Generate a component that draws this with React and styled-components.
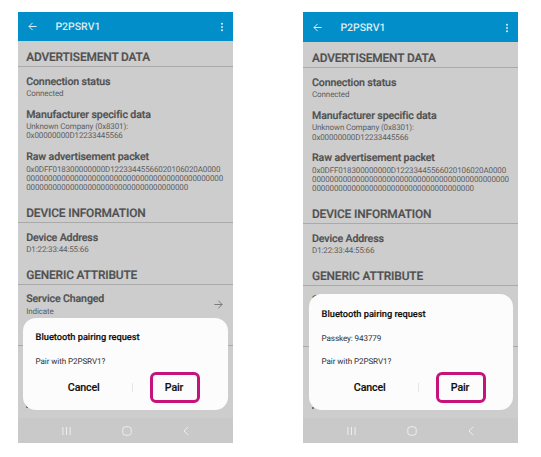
import React from "react";
import styled, { createGlobalStyle } from "styled-components";

const GlobalStyle = createGlobalStyle`
  * { box-sizing: border-box; }
  body { margin: 0; background: #fff; font-family: Roboto, sans-serif; }
`;

const Page = styled.main`
  width: 541px;
  height: 457px;
  display: flex;
  gap: 70px;
  padding: 12px 0 0 18px;
  overflow: hidden;
  text-rendering: geometricPrecision;
`;

const Phone = styled.section`
  position: relative;
  flex: none;
  width: 215px;
  height: 431px;
  display: flex;
  flex-direction: column;
  overflow: hidden;
  background: #cdcdcd;
  color: #505050;
  --inset: ${(p) => (p.$late ? "9px" : "8.2px")};
`;

const AppBar = styled.header`
  flex: none;
  height: ${(p) => (p.$late ? "29.8px" : "28.7px")};
  padding: ${(p) => (p.$late ? "2px" : "1px")} 9px 0 10px;
  display: flex;
  align-items: center;
  background: #028fc9;
  color: #dcecf4;
`;

const AppTitle = styled.h1`
  flex: 1;
  margin: 0 0 0 18.4px;
  padding-top: 1px;
  font-size: 10.5px;
  line-height: 14px;
  font-weight: 500;
`;

const Content = styled.div`
  flex: 1;
  min-height: 0;
  overflow: hidden;
`;

const SectionTitle = styled.h2`
  margin: 0;
  height: ${(p) => (p.$first ? "26.3px" : "30.2px")};
  padding: 0 var(--inset) 0.9px;
  display: flex;
  align-items: flex-end;
  border-bottom: 1px solid #aaa;
  font-size: 11.9px;
  line-height: 16px;
  font-weight: 500;
  letter-spacing: -0.14px;
  -webkit-text-stroke: 0.2px;
  white-space: nowrap;
`;

const Item = styled.div`
  display: flex;
  align-items: center;
  justify-content: space-between;
  padding: ${(p) => (p.$next ? "9.3px" : "7.6px")} 10px 0 var(--inset);
`;

const ItemName = styled.div`
  font-size: 10.6px;
  line-height: 14px;
  font-weight: 500;
  letter-spacing: -0.12px;
  -webkit-text-stroke: 0.2px;
  padding-bottom: 0.4px;
  white-space: nowrap;
`;

const ItemValue = styled.div`
  font-size: 8px;
  line-height: 9.4px;
  letter-spacing: -0.12px;
  color: #5e5e5e;
  white-space: nowrap;
`;

const Divider = styled.div`
  height: 1px;
  margin-top: ${(p) => (p.$late ? "38.4px" : "29px")};
  background: #aaa;
`;

const NextRow = styled.div`
  padding: 60px 0 0 var(--inset);

  &::before {
    content: "";
    display: block;
    width: 2px;
    height: 2px;
    background: #777;
  }
`;

const NavBar = styled.nav`
  flex: none;
  height: 25px;
  padding: 0 44px;
  display: flex;
  align-items: center;
  justify-content: space-between;
  background: #c9c9c9;
  color: #f2f2f2;
`;

const Dialog = styled.div`
  position: absolute;
  left: ${(p) => (p.$late ? "5.8px" : "4.8px")};
  bottom: 33.3px;
  width: ${(p) => (p.$late ? "204px" : "205px")};
  height: ${(p) => (p.$late ? "115.3px" : "92px")};
  padding: 13.3px 12.8px 0;
  display: flex;
  flex-direction: column;
  border-radius: 13px;
  background: #fcfcfc;
  color: #111;
`;

const DialogTitle = styled.h3`
  margin: 0;
  font-size: 9.3px;
  line-height: 14px;
  font-weight: 500;
  letter-spacing: -0.04px;
  -webkit-text-stroke: 0.15px;
  white-space: nowrap;
`;

const DialogText = styled.p`
  margin: ${(p) => (p.$first ? "10px" : "11.2px")} 0 0;
  font-size: 8.1px;
  line-height: 12px;
  letter-spacing: -0.1px;
  color: #303030;
  white-space: nowrap;
`;

const Actions = styled.div`
  display: flex;
  align-items: center;
  margin-top: 5.4px;
`;

const Button = styled.button`
  width: 96.3px;
  height: 31px;
  padding: 0;
  border: 0;
  background: none;
  font: 500 10.7px/31px Roboto, sans-serif;
  letter-spacing: -0.15px;
  -webkit-text-stroke: 0.15px;
  color: #111;
`;

const Separator = styled.span`
  width: 1px;
  height: 9px;
  background: #e6e6e6;
`;

const PairButton = styled(Button)`
  width: 50.3px;
  margin-left: 17px;
  border: 3px solid #c5137b;
  border-radius: 6px;
  line-height: 25px;
  padding-right: 2px;
`;

const Icon = styled.svg`
  flex: none;
  display: block;
  fill: none;
  stroke: currentColor;
`;

function BackIcon() {
  return (
    <Icon width="9" height="9" viewBox="0 0 9 9" strokeWidth="1">
      <path d="M8.6 4.5H1M4.6 .9 1 4.5l3.6 3.6" />
    </Icon>
  );
}

function MoreIcon() {
  return (
    <Icon width="4" height="10" viewBox="0 0 4 10">
      <g fill="currentColor" stroke="none">
        <circle cx="2" cy="1.8" r="1" />
        <circle cx="2" cy="5" r="1" />
        <circle cx="2" cy="8.2" r="1" />
      </g>
    </Icon>
  );
}

function ForwardIcon() {
  return (
    <Icon width="9" height="9" viewBox="0 0 9 9" strokeWidth="0.9" color="#707070">
      <path d="M.4 4.5H8M4.4 .7 8.1 4.5 4.4 8.3" />
    </Icon>
  );
}

function SystemNav() {
  return (
    <NavBar>
      <Icon width="9" height="10" viewBox="0 0 9 10" strokeWidth="0.9">
        <path d="M.9 1v8M4.5 1v8M8.1 1v8" />
      </Icon>
      <Icon width="10" height="10" viewBox="0 0 10 10" strokeWidth="0.9">
        <rect x="0.8" y="0.8" width="8.4" height="8.4" rx="2.6" />
      </Icon>
      <Icon width="6" height="10" viewBox="0 0 6 10" strokeWidth="0.9">
        <path d="M5.2 1 1 5l4.2 4" />
      </Icon>
    </NavBar>
  );
}

function Field({ name, lines = [], next, arrow }) {
  return (
    <Item $next={next}>
      <div>
        <ItemName>{name}</ItemName>
        {lines.map((line) => (
          <ItemValue key={line}>{line}</ItemValue>
        ))}
      </div>
      {arrow && <ForwardIcon />}
    </Item>
  );
}

function PairingScreen({ late, messages }) {
  return (
    <Phone $late={late}>
      <AppBar $late={late}>
        <BackIcon />
        <AppTitle>P2PSRV1</AppTitle>
        <MoreIcon />
      </AppBar>
      <Content>
        <SectionTitle $first>ADVERTISEMENT DATA</SectionTitle>
        <Field name="Connection status" lines={["Connected"]} />
        <Field
          next
          name="Manufacturer specific data"
          lines={["Unknown Company (0x8301):", "0x00000000D12233445566"]}
        />
        <Field
          next
          name="Raw advertisement packet"
          lines={[
            "0x0DFF018300000000D12233445566020106020A0000",
            "0".repeat(45),
            "0".repeat(37),
          ]}
        />
        <SectionTitle>DEVICE INFORMATION</SectionTitle>
        <Field name="Device Address" lines={["D1:22:33:44:55:66"]} />
        <SectionTitle>GENERIC ATTRIBUTE</SectionTitle>
        {late ? (
          <Field name="Service Changed" />
        ) : (
          <Field name="Service Changed" lines={["Indicate"]} arrow />
        )}
        <Divider $late={late} />
        <NextRow />
      </Content>
      <SystemNav />
      <Dialog $late={late}>
        <DialogTitle>Bluetooth pairing request</DialogTitle>
        {messages.map((message, i) => (
          <DialogText key={message} $first={i === 0}>
            {message}
          </DialogText>
        ))}
        <Actions>
          <Button>Cancel</Button>
          <Separator />
          <PairButton>Pair</PairButton>
        </Actions>
      </Dialog>
    </Phone>
  );
}

export default function App() {
  return (
    <>
      <GlobalStyle />
      <Page>
        <PairingScreen messages={["Pair with P2PSRV1?"]} />
        <PairingScreen late messages={["Passkey: 943779", "Pair with P2PSRV1?"]} />
      </Page>
    </>
  );
}
